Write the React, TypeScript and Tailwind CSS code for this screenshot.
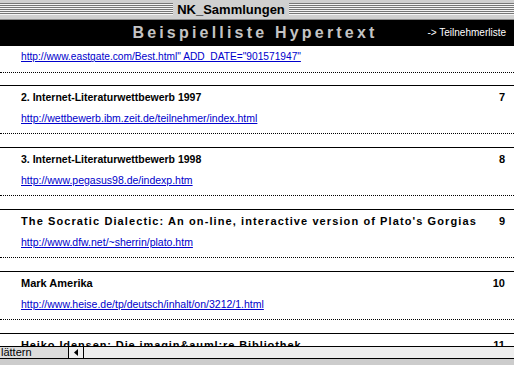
import React from "react";

const rows = [
  { title: "2. Internet-Literaturwettbewerb 1997", url: "http://wettbewerb.ibm.zeit.de/teilnehmer/index.html", n: "7", cls: "text-[10.5px]" },
  { title: "3. Internet-Literaturwettbewerb 1998", url: "http://www.pegasus98.de/indexp.htm", n: "8", cls: "text-[10.5px]" },
  { title: "The Socratic Dialectic: An on-line, interactive version of Plato's Gorgias", url: "http://www.dfw.net/~sherrin/plato.htm", n: "9", cls: "text-[11px] tracking-[1.1px]" },
  { title: "Mark Amerika", url: "http://www.heise.de/tp/deutsch/inhalt/on/3212/1.html", n: "10", cls: "text-[11px]" },
  { title: "Heiko Idensen: Die imagin&auml;re Bibliothek", url: "http://www.hyperdis.de/", n: "11", cls: "text-[11px] tracking-[0.9px]" },
];

function Stripes({ className = "" }: { className?: string }) {
  return (
    <div className={"flex flex-col pt-[3px] " + className}>
      {[0, 1, 2, 3, 4, 5].map((i) => (
        <div key={i} className="h-[2px] flex flex-col">
          <div className="h-[1px] bg-[#777777]" />
          <div className="h-[1px] bg-[#f4f4f4]" />
        </div>
      ))}
    </div>
  );
}

function Dotted() {
  return <div className="h-0 border-t border-dotted border-black" />;
}

export default function App() {
  return (
    <div
      className="w-[514px] h-[365px] overflow-hidden bg-white flex flex-col text-black"
      style={{ fontFamily: '"Liberation Sans", Arial, sans-serif' }}
    >
      {/* title bar */}
      <div className="h-[20px] shrink-0 bg-[#d0d0d0] flex border-b border-[#888888]">
        <Stripes className="w-[173px]" />
        <div className="w-[116px] text-center text-[13px] font-bold leading-[19px] text-black">NK_Sammlungen</div>
        <Stripes className="flex-1" />
      </div>
      {/* header */}
      <div className="h-[26px] shrink-0 bg-black flex items-center relative">
        <div className="flex-1 text-center text-[16px] font-bold tracking-[3.2px] text-[#c4c4c4] pr-[4px]">
          Beispielliste Hypertext
        </div>
        <div className="absolute right-[8px] top-[6px] text-[10px] text-white leading-[14px]">-&gt; Teilnehmerliste</div>
      </div>
      {/* content */}
      <div className="flex-1 overflow-hidden flex flex-col">
        <div className="h-[22px] shrink-0 flex items-center pl-[21px]">
          <span className="text-[10.2px] text-[#0000cc] underline">
            http://www.eastgate.com/Best.html" ADD_DATE="901571947"
          </span>
        </div>
        <div className="h-[4px] shrink-0" />
        <Dotted />
        <div className="h-[12px] shrink-0" />
        {rows.map((r) => (
          <div key={r.n} className="h-[62px] shrink-0 flex flex-col border-t border-black">
            <div className="h-[23px] shrink-0 flex items-center pl-[21px] pr-[9px]">
              <span className={"flex-1 font-bold whitespace-nowrap " + r.cls}>{r.title}</span>
              <span className="text-[11px] font-bold">{r.n}</span>
            </div>
            <div className="h-[20px] shrink-0 flex items-center pl-[21px]">
              <span className="text-[10.5px] text-[#0000cc] underline">{r.url}</span>
            </div>
            <div className="h-[4px] shrink-0" />
            <Dotted />
          </div>
        ))}
      </div>
      {/* bottom bar */}
      <div className="h-[13px] shrink-0 border-t border-b border-black bg-[#eeeeee] flex">
        <div className="w-[69px] bg-[#dddddd] border-r border-black text-[11px] leading-[11px] pl-[1px] overflow-hidden whitespace-nowrap">
          lättern
        </div>
        <div className="w-[15px] border-r border-black flex items-center justify-center">
          <svg width="4" height="7" viewBox="0 0 4 7">
            <polygon points="4,0 0,3.5 4,7" fill="#000" />
          </svg>
        </div>
        <div className="flex-1" />
      </div>
      <div className="h-[6px] shrink-0 bg-[#cccccc]" />
    </div>
  );
}
